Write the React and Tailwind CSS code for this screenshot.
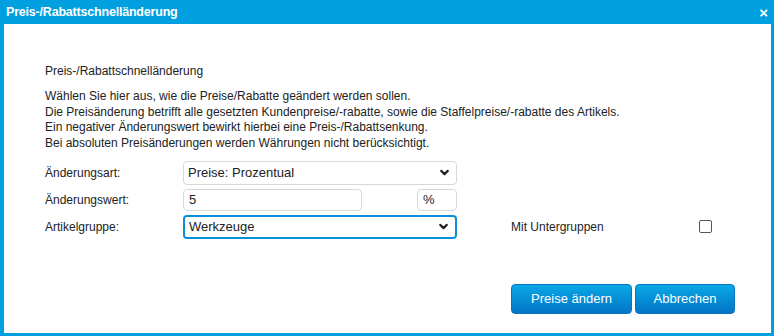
import { ChevronDown } from "lucide-react";

function SelectBox({ value, focused }) {
  return (
    <div
      className={
        "flex h-6 w-[274px] items-center justify-between rounded bg-white pl-[4px] pr-[5px] text-[13px] text-[#222] " +
        (focused ? "border-2 border-[#0a8fd8] pl-[3px]" : "border border-[#d8d8d8]")
      }
    >
      <span>{value}</span>
      <ChevronDown size={13} strokeWidth={4} className="text-[#222]" />
    </div>
  );
}

export default function App() {
  return (
    <div className="flex h-[336px] w-[774px] flex-col bg-[#009fe0] font-['Liberation_Sans',Arial,sans-serif]">
      <div className="flex h-6 shrink-0 items-center justify-between pl-[6px] pr-[6px] text-white">
        <span className="text-[12.5px] font-bold tracking-[-0.2px]">Preis-/Rabattschnelländerung</span>
        <span className="text-[15px] font-bold leading-none">×</span>
      </div>

      <div className="mb-[3px] ml-1 mr-[3px] flex flex-1 flex-col bg-white pl-[41px] pr-[36px] pt-[39px] text-[12px] text-[#222]">
        <div className="leading-4">Preis-/Rabattschnelländerung</div>

        <div className="mt-[10px] leading-[15.7px]">
          <p>Wählen Sie hier aus, wie die Preise/Rabatte geändert werden sollen.</p>
          <p>Die Preisänderung betrifft alle gesetzten Kundenpreise/-rabatte, sowie die Staffelpreise/-rabatte des Artikels.</p>
          <p>Ein negativer Änderungswert bewirkt hierbei eine Preis-/Rabattsenkung.</p>
          <p>Bei absoluten Preisänderungen werden Währungen nicht berücksichtigt.</p>
        </div>

        <div className="mt-[9px] flex flex-col gap-1">
          <div className="flex items-center">
            <span className="w-[138px]">Änderungsart:</span>
            <SelectBox value="Preise: Prozentual" />
          </div>

          <div className="flex items-center">
            <span className="w-[138px]">Änderungswert:</span>
            <div className="flex h-[22px] w-[179px] items-center rounded border border-[#d8d8d8] pl-[5px] text-[13px]">5</div>
            <div className="ml-[55px] flex h-[22px] w-10 items-center rounded border border-[#d8d8d8] pl-[5px] text-[13px]">%</div>
          </div>

          <div className="flex items-center">
            <span className="w-[138px]">Artikelgruppe:</span>
            <SelectBox value="Werkzeuge" focused />
            <span className="ml-[54px] w-[188px]">Mit Untergruppen</span>
            <span className="h-[13px] w-[13px] rounded-[2px] border border-[#555] bg-white" />
          </div>
        </div>

        <div className="mt-auto mb-[19px] flex justify-end gap-[3px]">
          <button className="h-[30px] w-[121px] rounded border border-[#0b74bd] bg-gradient-to-b from-[#0aa8e6] to-[#0575c6] text-[13px] text-white">
            Preise ändern
          </button>
          <button className="h-[30px] w-[100px] rounded border border-[#0b74bd] bg-gradient-to-b from-[#0aa8e6] to-[#0575c6] text-[13px] text-white">
            Abbrechen
          </button>
        </div>
      </div>
    </div>
  );
}
